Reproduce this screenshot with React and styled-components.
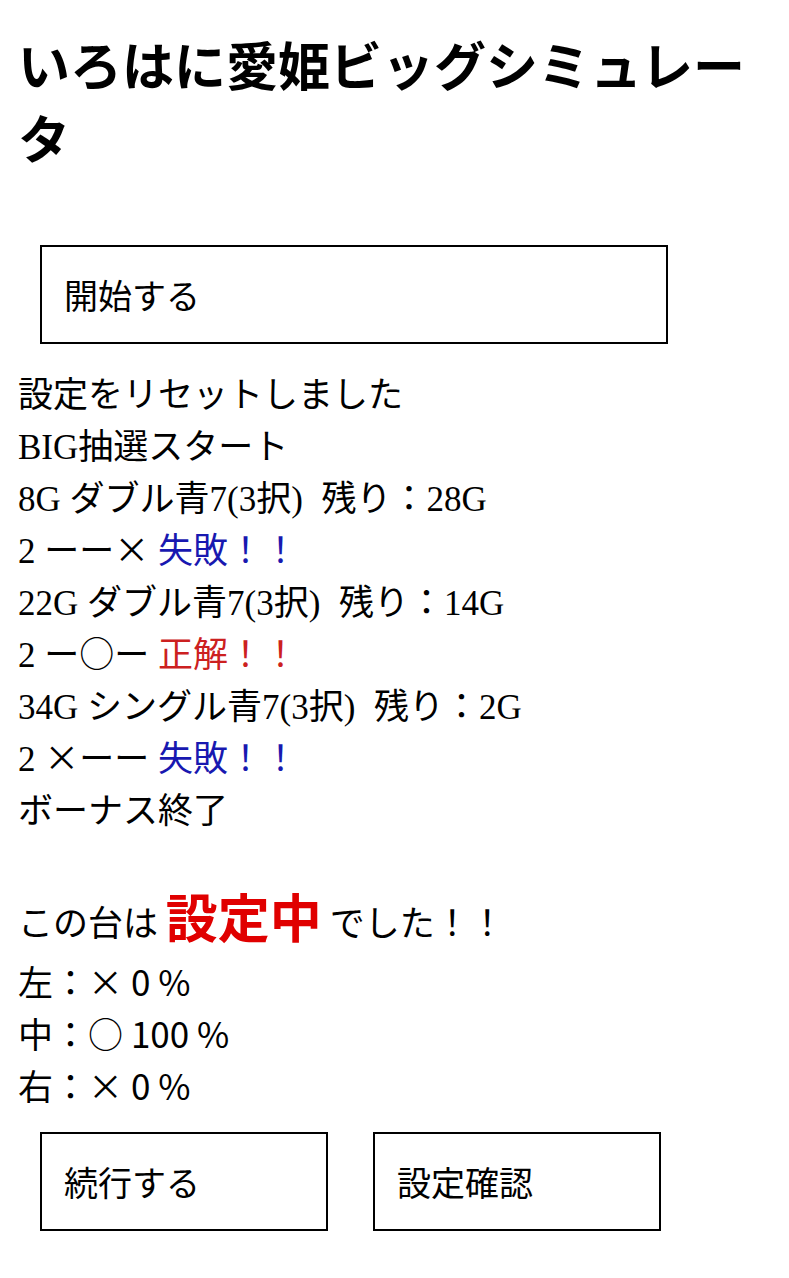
import React from "react";
import styled, { createGlobalStyle } from "styled-components";

const GlobalStyle = createGlobalStyle`
  html, body {
    margin: 0;
    padding: 0;
    background: #fff;
  }
  body {
    color: #000;
    font-family: "Noto Sans CJK JP", sans-serif;
  }
`;

const Page = styled.div`
  padding: 0 18px 40px;
`;

const Title = styled.h1`
  margin: 27px 0 72px;
  font-family: "Noto Sans CJK JP", sans-serif;
  font-size: 52px;
  font-weight: 700;
  line-height: 73px;
  letter-spacing: 0;
`;

const Button = styled.button`
  display: flex;
  align-items: center;
  box-sizing: border-box;
  width: ${(p) => p.$width}px;
  height: 99px;
  padding: 0 0 0 22px;
  background: #fff;
  border: 2px solid #000;
  border-radius: 0;
  color: #000;
  font-family: "Noto Sans CJK JP", sans-serif;
  font-size: 34px;
  cursor: pointer;
`;

const StartRow = styled.div`
  padding-left: 22px;
  margin-bottom: 23px;
`;

const Log = styled.div`
  font-family: "Liberation Serif", "Noto Sans CJK JP", serif;
  font-size: 35px;
  line-height: 52px;
`;

const Line = styled.div`
  white-space: pre;
  height: 49px;
  padding-top: 3px;
  overflow: visible;
`;

const Kind = styled.span`
  margin-right: 10px;
`;

const Kana = styled.span`
  font-family: "Noto Sans CJK JP", sans-serif;
  line-height: 1;
`;

const Verdict = styled.span`
  font-family: "Noto Sans CJK JP", sans-serif;
  line-height: 1;
  color: ${(p) => (p.$ok ? "#cc2020" : "#1818b0")};
`;

const ResultLine = styled.div`
  font-family: "Noto Sans CJK JP", sans-serif;
  font-size: 35px;
  line-height: 68px;
  height: 68px;
  white-space: pre;
`;

const Setting = styled.span`
  color: #e00000;
  font-size: 52px;
  font-weight: 700;
  line-height: 1;
  vertical-align: -2px;
`;

const Rate = styled.div`
  font-family: "Noto Sans CJK JP", sans-serif;
  font-size: 35px;
  line-height: 52px;
  height: 52px;
  white-space: pre;
`;

const ButtonRow = styled.div`
  display: flex;
  gap: 45px;
  padding-left: 22px;
  margin-top: 21px;
`;

const log = [
  { text: "設定をリセットしました" },
  { text: "BIG抽選スタート" },
  { game: "8G", kind: "ダブル青7(3択)", rest: "28G" },
  { reel: "ーー×", ok: false },
  { game: "22G", kind: "ダブル青7(3択)", rest: "14G" },
  { reel: "ー○ー", ok: true },
  { game: "34G", kind: "シングル青7(3択)", rest: "2G" },
  { reel: "×ーー", ok: false },
  { text: "ボーナス終了" },
];

const rates = [
  { pos: "左", mark: "×", value: "0" },
  { pos: "中", mark: "○", value: "100" },
  { pos: "右", mark: "×", value: "0" },
];

function LogLine({ item }) {
  if (item.reel) {
    return (
      <Line>
        2 <Kana>{item.reel}</Kana>{" "}
        <Verdict $ok={item.ok}>{item.ok ? "正解！！" : "失敗！！"}</Verdict>
      </Line>
    );
  }
  if (item.game) {
    return (
      <Line>
        {item.game} <Kind>{item.kind}</Kind> 残り：{item.rest}
      </Line>
    );
  }
  return <Line>{item.text}</Line>;
}

export default function App() {
  return (
    <>
      <GlobalStyle />
      <Page>
        <Title>いろはに愛姫ビッグシミュレータ</Title>
        <StartRow>
          <Button $width={628}>開始する</Button>
        </StartRow>
        <Log>
          {log.map((item, i) => (
            <LogLine key={i} item={item} />
          ))}
          <Line />
        </Log>
        <ResultLine>
          この台は <Setting>設定中</Setting> でした！！
        </ResultLine>
        {rates.map((r) => (
          <Rate key={r.pos}>
            {r.pos}：{r.mark} {r.value} %
          </Rate>
        ))}
        <ButtonRow>
          <Button $width={288}>続行する</Button>
          <Button $width={288}>設定確認</Button>
        </ButtonRow>
      </Page>
    </>
  );
}
